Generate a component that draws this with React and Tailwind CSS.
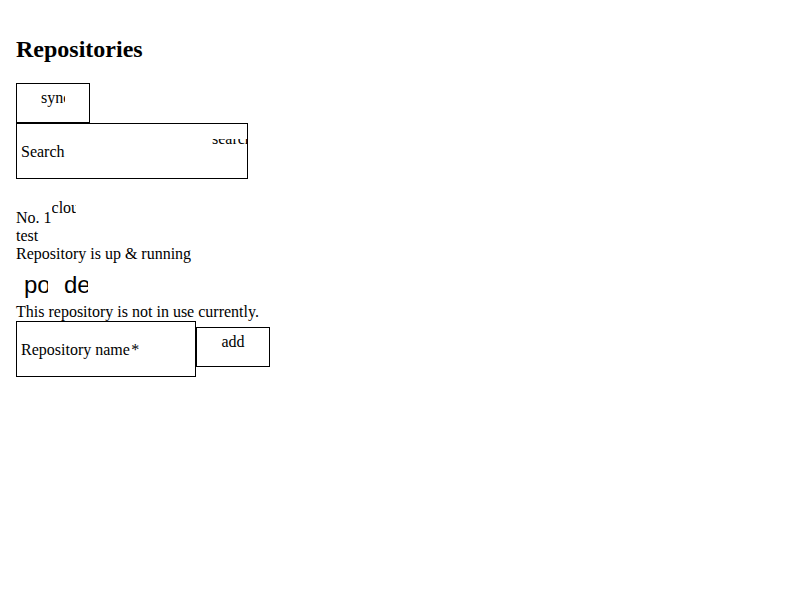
import React from 'react';

const Icon = ({ name, className = '' }) => (
    <span className={`inline-block w-6 h-6 overflow-hidden whitespace-nowrap ${className}`}>{name}</span>
);

const App = () => {
    return (
        <div className="p-4 font-['Liberation_Serif',serif] text-[16px] leading-[normal] text-black bg-white min-h-[600px]">
            <h2 className="text-[24px] font-bold leading-[normal] my-[19.92px]">Repositories</h2>

            <button className="w-[74px] h-[40px] border border-black flex justify-center items-start pt-[5px] bg-white">
                <span className="block w-6 h-6 overflow-hidden whitespace-nowrap">sync</span>
            </button>

            <div className="relative w-[232px] h-[56px] border border-black pt-[19px] pl-[4px] leading-[18px] overflow-hidden">
                Search
                <div className="absolute left-[195px] top-[15px] w-[40px] h-[7px] overflow-hidden">
                    <span className="block -mt-[9px] leading-[18px] whitespace-nowrap">search</span>
                </div>
            </div>

            <div className="mt-[20px]">
                <div>
                    No. 1<Icon name="cloud" />
                </div>
                <div>test</div>
                <div>Repository is up &amp; running</div>
                <div className="flex">
                    <button className="p-2">
                        <span className="relative top-[2px] block w-6 leading-6 overflow-x-clip whitespace-nowrap font-['Liberation_Sans',sans-serif] text-[24px]">power_settings_new</span>
                    </button>
                    <button className="p-2">
                        <span className="relative top-[2px] block w-6 leading-6 overflow-x-clip whitespace-nowrap font-['Liberation_Sans',sans-serif] text-[24px]">delete</span>
                    </button>
                </div>
                <div>This repository is not in use currently.</div>
            </div>

            <div className="flex items-start">
                <div className="w-[180px] h-[56px] border border-black pt-[19px] pl-[4px] leading-[18px]">
                    Repository name{'\u200A'}*
                </div>
                <button className="w-[74px] h-[40px] mt-[6px] border border-black flex justify-center items-start pt-[5px] bg-white">
                    <span className="block w-6 h-6 overflow-hidden whitespace-nowrap">add</span>
                </button>
            </div>
        </div>
    );
};

export default App;
